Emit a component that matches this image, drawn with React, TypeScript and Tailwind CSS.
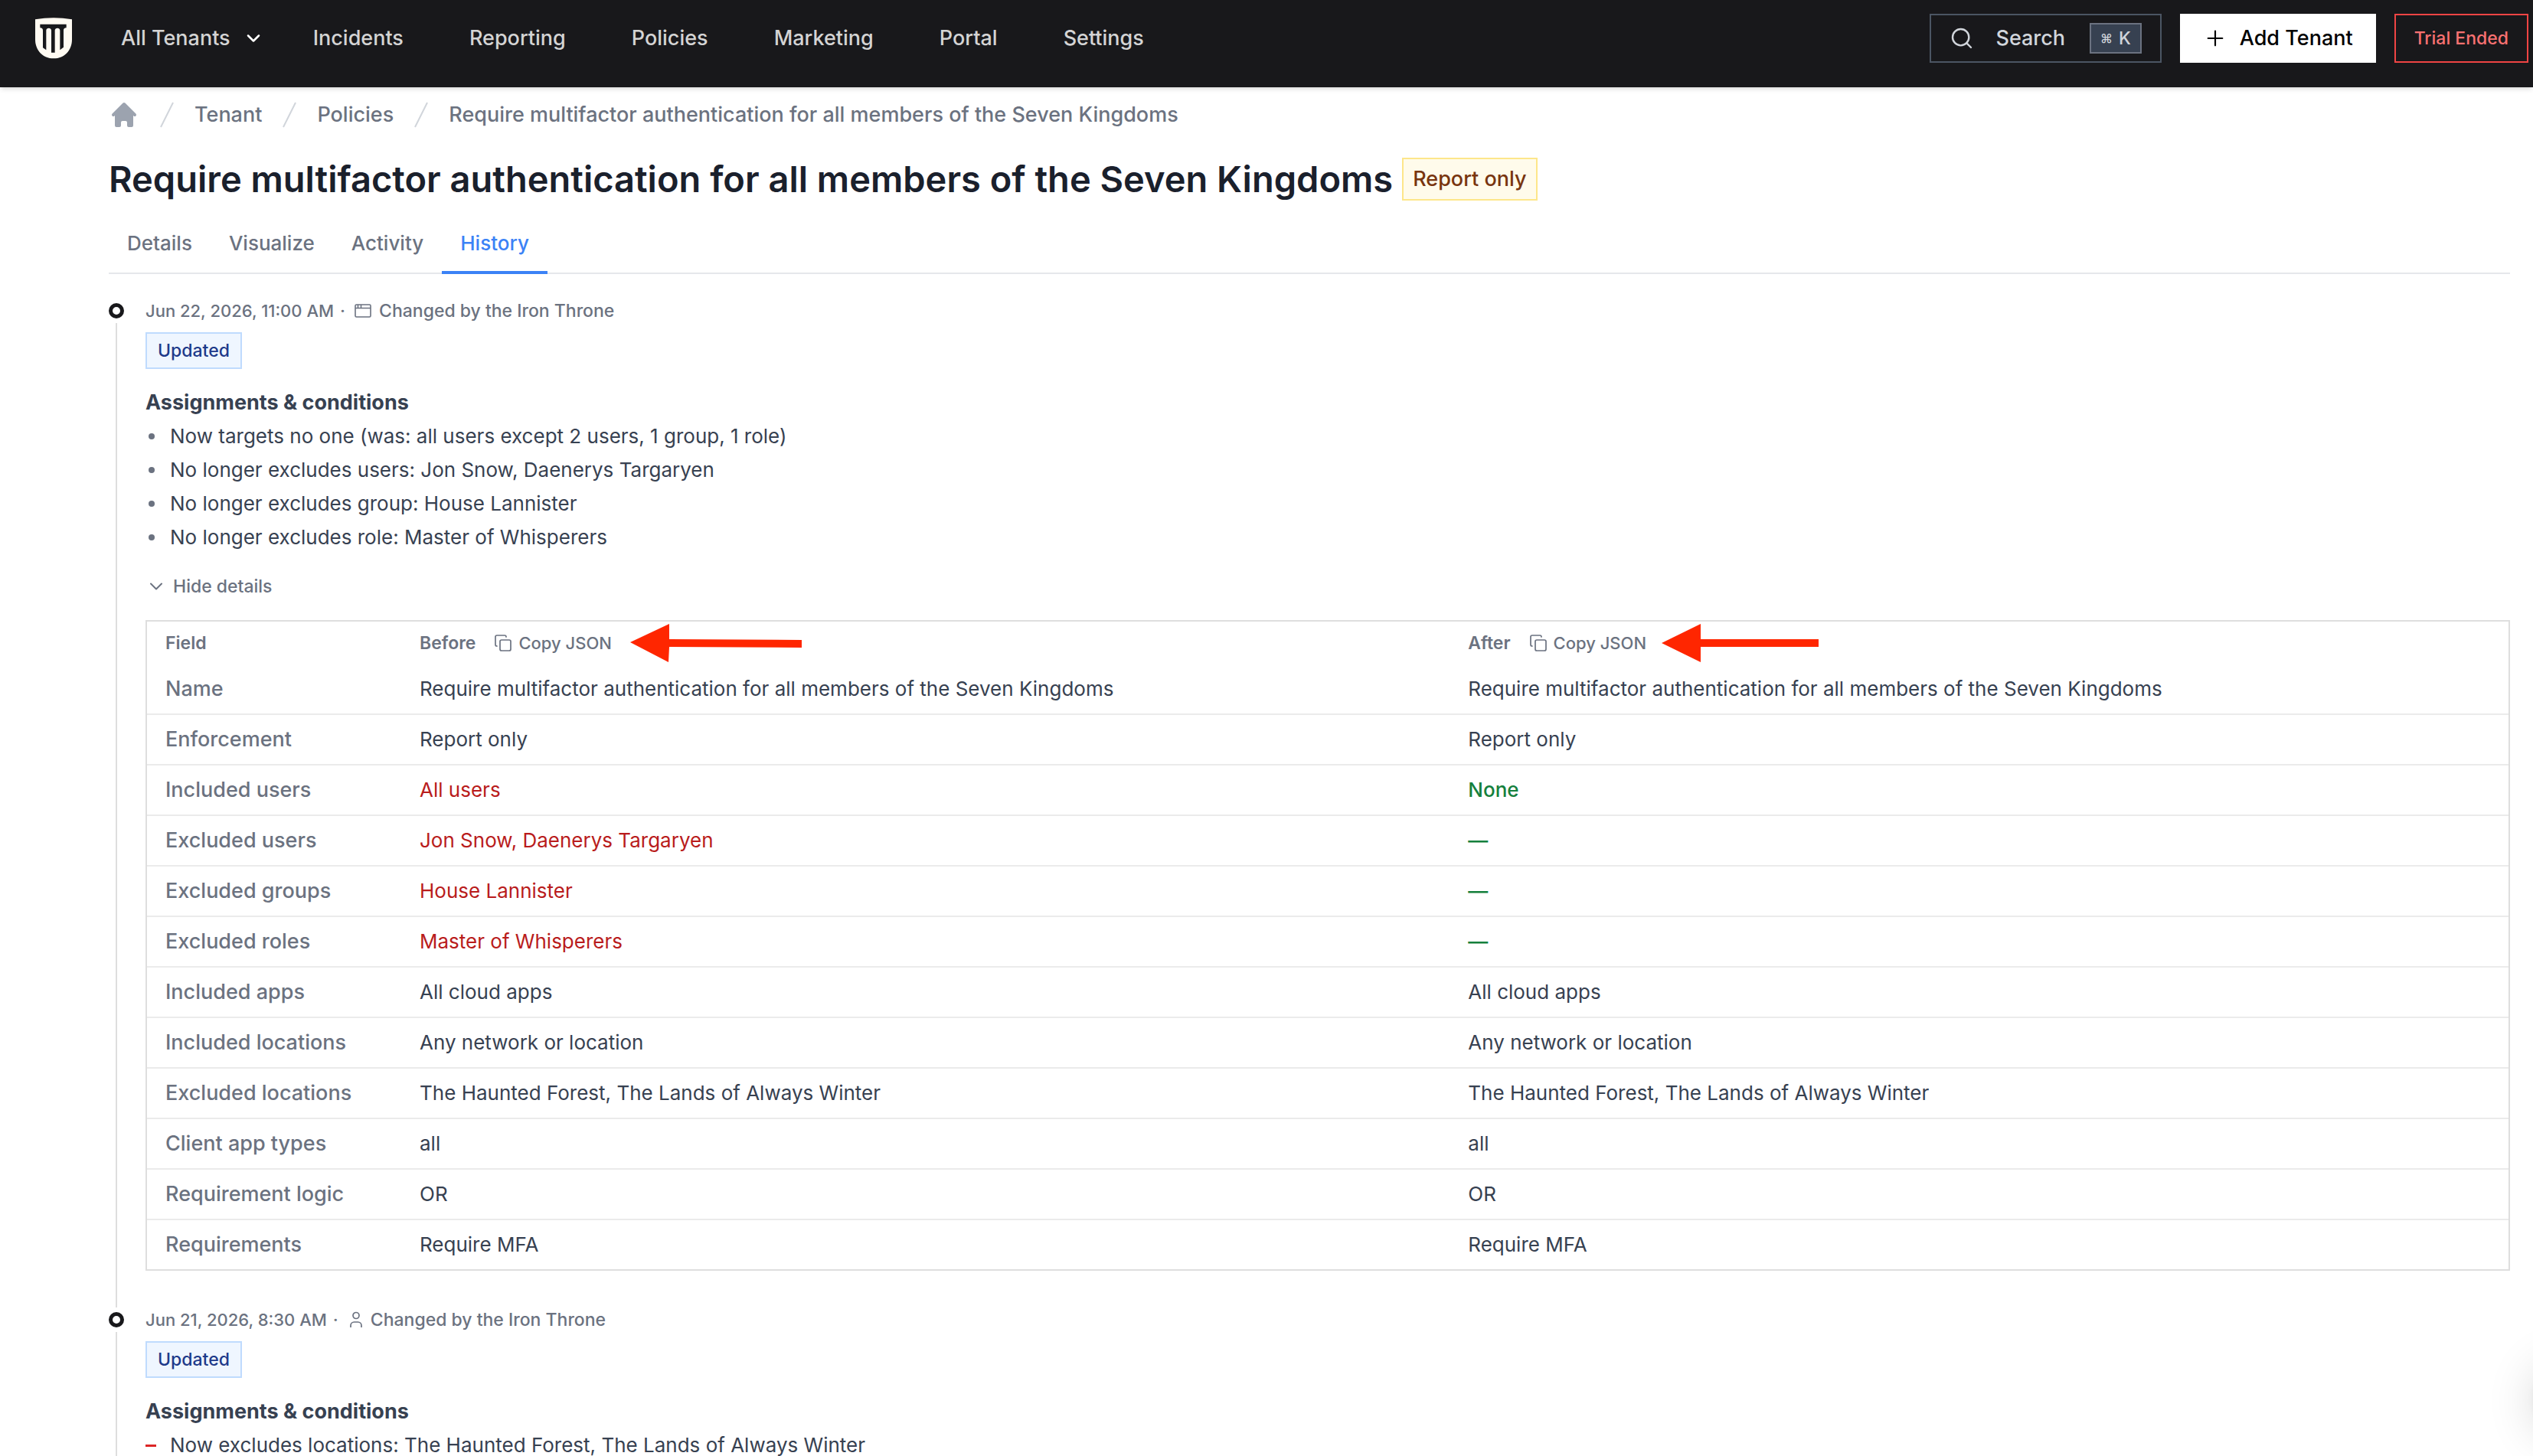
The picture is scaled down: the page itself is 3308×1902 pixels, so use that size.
import { ChevronDown, Copy, Plus, Search } from "lucide-react";
import { HiHome } from "react-icons/hi";

const NAV_LINKS = ["Incidents", "Reporting", "Policies", "Marketing", "Portal", "Settings"];
const TABS = ["Details", "Visualize", "Activity", "History"];
const POLICY_NAME = "Require multifactor authentication for all members of the Seven Kingdoms";

interface FieldRow {
  field: string;
  before: string;
  after: string;
  changed?: boolean;
}

const ROWS: FieldRow[] = [
  { field: "Name", before: POLICY_NAME, after: POLICY_NAME },
  { field: "Enforcement", before: "Report only", after: "Report only" },
  { field: "Included users", before: "All users", after: "None", changed: true },
  { field: "Excluded users", before: "Jon Snow, Daenerys Targaryen", after: "—", changed: true },
  { field: "Excluded groups", before: "House Lannister", after: "—", changed: true },
  { field: "Excluded roles", before: "Master of Whisperers", after: "—", changed: true },
  { field: "Included apps", before: "All cloud apps", after: "All cloud apps" },
  { field: "Included locations", before: "Any network or location", after: "Any network or location" },
  {
    field: "Excluded locations",
    before: "The Haunted Forest, The Lands of Always Winter",
    after: "The Haunted Forest, The Lands of Always Winter",
  },
  { field: "Client app types", before: "all", after: "all" },
  { field: "Requirement logic", before: "OR", after: "OR" },
  { field: "Requirements", before: "Require MFA", after: "Require MFA" },
];

interface HistoryEvent {
  date: string;
  actor: "app" | "user";
  changes: { text: string; removed?: boolean }[];
  rows?: FieldRow[];
}

const EVENTS: HistoryEvent[] = [
  {
    date: "Jun 22, 2026, 11:00 AM",
    actor: "app",
    changes: [
      { text: "Now targets no one (was: all users except 2 users, 1 group, 1 role)" },
      { text: "No longer excludes users: Jon Snow, Daenerys Targaryen" },
      { text: "No longer excludes group: House Lannister" },
      { text: "No longer excludes role: Master of Whisperers" },
    ],
    rows: ROWS,
  },
  {
    date: "Jun 21, 2026, 8:30 AM",
    actor: "user",
    changes: [
      { text: "Now excludes locations: The Haunted Forest, The Lands of Always Winter", removed: true },
    ],
  },
];

function Logo() {
  return (
    <svg className="h-[54px] w-12" viewBox="0 0 144 162" aria-hidden="true">
      <path d="M0 7Q72 -6 144 7V86C144 127 115 160 72 160C29 160 0 127 0 86Z" fill="#fffaf2" />
      <path
        d="M19 26H122V40C114 40 111 44 111 50V116L97 127V50C97 38 77 38 77 50V137H63V50C63 38 43 38 43 50V127L30 118V50C30 44 27 40 19 40Z"
        fill="#18181b"
      />
    </svg>
  );
}

function Slash() {
  return (
    <svg className="size-10 shrink-0 text-[#d1d5db]" viewBox="0 0 20 20" fill="currentColor" aria-hidden="true">
      <path d="M5.555 17.776l8-16 .894.448-8 16-.894-.448z" />
    </svg>
  );
}

function WindowIcon() {
  return (
    <svg className="h-6 w-[22px]" viewBox="0 0 22 24" fill="none" stroke="currentColor" strokeWidth={1.6} aria-hidden="true">
      <rect x="1" y="4" width="20" height="16" rx="1.5" />
      <path d="M1 8.5h20M4.5 4v4.5M8.5 4v4.5" />
    </svg>
  );
}

function UserIcon() {
  return (
    <svg className="h-6 w-5" viewBox="0 0 20 24" fill="none" stroke="currentColor" strokeWidth={1.7} aria-hidden="true">
      <circle cx="11" cy="6.500" r="4" />
      <path d="M4 22v-2.500a4.500 4.500 0 0 1 4.500-4.500h5a4.500 4.500 0 0 1 4.500 4.500V22" />
    </svg>
  );
}

function Arrow({ wide }: { wide?: boolean }) {
  return wide ? (
    <svg className="ml-6 h-[50px] w-[224px]" viewBox="0 0 224 50" fill="#ff2600" aria-hidden="true">
      <path d="M0 24L51 0V20L224 21V31L51 30L50 50Z" />
    </svg>
  ) : (
    <svg className="ml-5 h-[50px] w-[205px]" viewBox="0 0 205 50" fill="#ff2600" aria-hidden="true">
      <path d="M0 25L51 0V20H205V30H51V50Z" />
    </svg>
  );
}

function CopyJsonButton() {
  return (
    <button type="button" className="ml-6 flex items-center gap-2 text-[22px] font-medium">
      <Copy className="size-6" strokeWidth={1.7} />
      Copy JSON
    </button>
  );
}

function Header() {
  return (
    <header className="relative z-10 flex items-center bg-[#18181b] pt-[18px] pr-1.5 pb-8 pl-[46px] text-[27px] leading-10 font-medium text-[#d4d4d4] shadow-md">
      <Logo />
      <button type="button" className="ml-16 flex items-center gap-4">
        All Tenants
        <ChevronDown className="size-7 text-white" strokeWidth={2.2} />
      </button>
      <nav className="ml-16 flex items-center gap-[86px]">
        {NAV_LINKS.map((link) => (
          <a key={link} href="#">
            {link}
          </a>
        ))}
      </nav>
      <div className="ml-auto flex items-center gap-6">
        <button type="button" className="flex h-16 items-center border-2 border-[#4b5563] px-6 text-[#d1d5db]">
          <Search className="size-8" strokeWidth={1.8} />
          <span className="ml-7">Search</span>
          <kbd className="ml-8 flex h-10 items-center gap-2 border-2 border-[#6b7280] bg-[#374151] px-3 font-[Inter,'DejaVu_Sans',sans-serif]">
            <span className="text-base">⌘</span>
            <span className="text-[23px]">K</span>
          </kbd>
        </button>
        <button type="button" className="flex h-16 items-center gap-4 bg-white px-[30px] text-black">
          <Plus className="size-8" strokeWidth={1.6} />
          Add Tenant
        </button>
        <button type="button" className="h-16 border-2 border-[#ef4444] px-6 text-[23px] text-[#f87171]">
          Trial Ended
        </button>
      </div>
    </header>
  );
}

function Breadcrumb() {
  return (
    <nav aria-label="Breadcrumb" className="flex items-center gap-4 text-[27px] leading-10 font-medium text-[#6b7280]">
      <a href="#" aria-label="Home">
        <HiHome className="size-10 text-[#9ca3af]" />
      </a>
      <Slash />
      <a href="#">Tenant</a>
      <Slash />
      <a href="#">Policies</a>
      <Slash />
      <a href="#">{POLICY_NAME}</a>
    </nav>
  );
}

function DetailsTable({ rows }: { rows: FieldRow[] }) {
  return (
    <div className="mt-7 border-2 border-[#dedede]">
      <table className="w-full table-fixed text-left text-[26px] leading-10 text-[#374151]">
        <thead className="text-[23px] text-[#6b7280]">
          <tr>
            <th className="h-14 w-[332px] px-6 py-0 font-semibold">Field</th>
            <th className="h-14 w-[44.4%] px-6 py-0 font-semibold">
              <div className="flex items-center">
                Before
                <CopyJsonButton />
                <Arrow wide />
              </div>
            </th>
            <th className="h-14 px-6 py-0 font-semibold">
              <div className="flex items-center">
                After
                <CopyJsonButton />
                <Arrow />
              </div>
            </th>
          </tr>
        </thead>
        <tbody className="divide-y-2 divide-[#ebebeb]">
          {rows.map((row) => (
            <tr key={row.field}>
              <td className="px-6 py-3 text-[27px] font-medium text-[#6b7280]">{row.field}</td>
              <td className={`px-6 py-3 ${row.changed ? "text-[#b91c1c]" : ""}`}>{row.before}</td>
              <td className={`px-6 py-3 ${row.changed ? "font-medium text-[#15803d]" : ""}`}>{row.after}</td>
            </tr>
          ))}
        </tbody>
      </table>
    </div>
  );
}

function TimelineItem({ event }: { event: HistoryEvent }) {
  return (
    <li className="flex gap-7">
      <div className="flex w-5 flex-col items-center">
        <span className="mt-1.5 mb-1.5 size-5 shrink-0 rounded-full border-5 border-[#18181b]" />
        <span className="w-0.5 grow bg-[#dedede]" />
      </div>
      <div className="min-w-0 grow pb-12">
        <div className="flex h-8 items-center text-[23px] leading-8 font-medium text-[#6b7280]">
          <span className="text-[22px]">{event.date}</span>
          <span className="mr-3 ml-2">·</span>
          {event.actor === "app" ? <WindowIcon /> : <UserIcon />}
          <span className="ml-2.5">Changed by the Iron Throne</span>
        </div>
        <span className="mt-3 inline-flex h-12 items-center border-2 border-[#bfdbfe] bg-[#eff6ff] px-3.5 text-[23px] leading-8 font-medium text-[#1e3a8a]">
          Updated
        </span>
        <h3 className="mt-6 text-[27px] leading-10 font-bold text-[#374151]">Assignments &amp; conditions</h3>
        <ul className="mt-1 space-y-1 text-[26px] leading-10 text-[#374151]">
          {event.changes.map((change) => (
            <li key={change.text} className="flex items-center">
              <span className="flex w-8 shrink-0 items-center">
                {change.removed ? (
                  <span className="h-[3px] w-3.5 bg-[#dc2626]" />
                ) : (
                  <span className="ml-1 size-2 rounded-full bg-[#6b7280]" />
                )}
              </span>
              {change.text}
            </li>
          ))}
        </ul>
        {event.rows && (
          <>
            <button type="button" className="mt-7 flex items-center gap-2 text-[23px] leading-8 font-medium text-[#6b7280]">
              <ChevronDown className="size-7" strokeWidth={1.7} />
              Hide details
            </button>
            <DetailsTable rows={event.rows} />
          </>
        )}
      </div>
    </li>
  );
}

export default function App() {
  return (
    <div className="h-screen overflow-hidden bg-white font-[Inter,sans-serif]">
      <Header />
      <main className="pt-4 pr-[30px] pl-[142px]">
        <Breadcrumb />
        <div className="mt-9 flex items-center gap-3">
          <h1 className="text-[47px] leading-14 font-semibold text-[#1a202c]">{POLICY_NAME}</h1>
          <span className="flex h-14 items-center border-2 border-[#fde68a] bg-[#fffbeb] px-3 text-[27px] leading-10 font-medium text-[#78350f]">
            Report only
          </span>
        </div>
        <div className="mt-8 flex border-b-2 border-[#e5e7eb] text-[26px] leading-10 font-medium">
          {TABS.map((tab) => (
            <button
              key={tab}
              type="button"
              className={`-mb-0.5 border-b-4 px-6 pt-1 pb-4 ${
                tab === "History" ? "border-[#3b82f6] text-[#3b82f6]" : "border-transparent text-[#6b7280]"
              }`}
            >
              {tab}
            </button>
          ))}
        </div>
        <ol className="mt-8">
          {EVENTS.map((event) => (
            <TimelineItem key={event.date} event={event} />
          ))}
        </ol>
      </main>
      {/* Chat launcher, parked just past the window edge */}
      <button
        type="button"
        aria-label="Open chat"
        className="fixed right-[-96px] bottom-7 size-24 rounded-full bg-[#374151] shadow-[0_2px_12px_rgba(0,0,0,0.06),0_4px_64px_rgba(0,0,0,0.16)]"
      />
    </div>
  );
}
